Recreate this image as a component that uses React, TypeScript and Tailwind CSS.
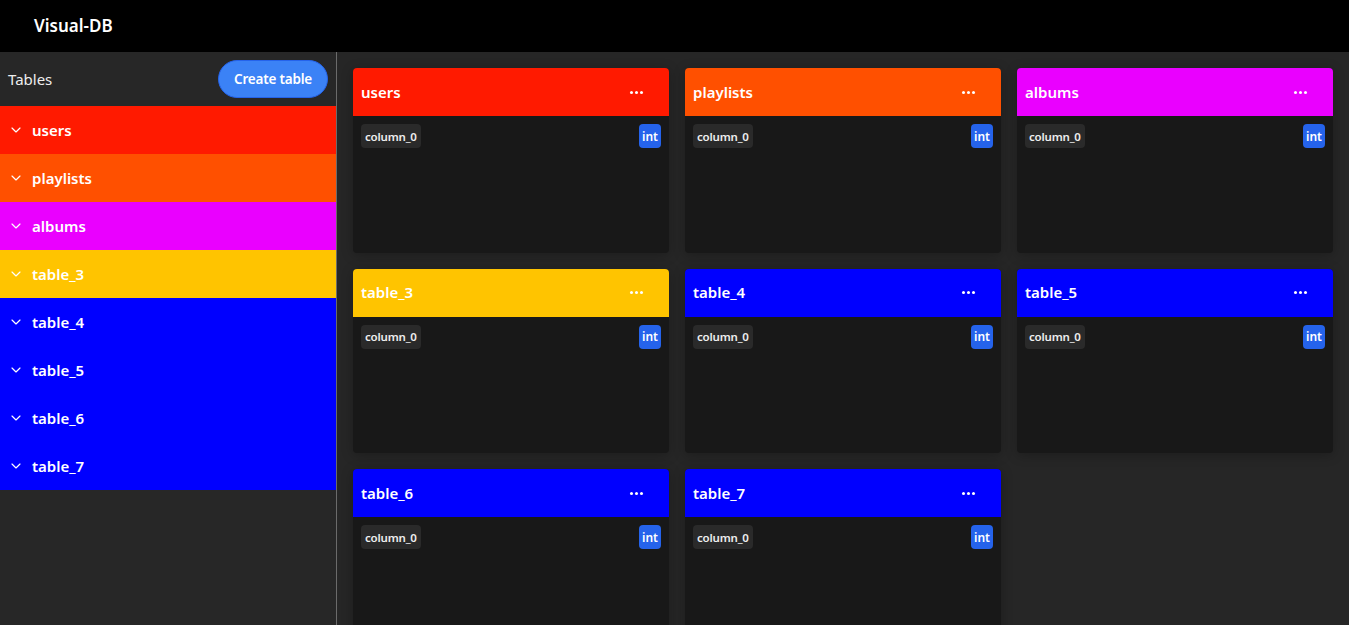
import { ChevronDown } from "lucide-react";

const tables = [
  { name: "users", color: "bg-[#ff1a00]" },
  { name: "playlists", color: "bg-[#ff5000]" },
  { name: "albums", color: "bg-[#ea00ff]" },
  { name: "table_3", color: "bg-[#ffc400]" },
  { name: "table_4", color: "bg-[#0000ff]" },
  { name: "table_5", color: "bg-[#0000ff]" },
  { name: "table_6", color: "bg-[#0000ff]" },
  { name: "table_7", color: "bg-[#0000ff]" },
];

function Dots() {
  return (
    <span className="flex items-center gap-[2px]">
      <span className="size-[3px] rounded-full bg-white" />
      <span className="size-[3px] rounded-full bg-white" />
      <span className="size-[3px] rounded-full bg-white" />
    </span>
  );
}

function TableCard({ name, color }: { name: string; color: string }) {
  return (
    <div className="h-[184.5px] rounded-[4px] overflow-hidden bg-[#181818] shadow-[0_2px_12px_rgba(0,0,0,0.25)]">
      <div className={`h-12 flex items-center justify-between pl-2 pr-[26px] ${color}`}>
        <span className="text-white font-semibold text-[15px]">{name}</span>
        <Dots />
      </div>
      <div className="flex items-start justify-between px-2 pt-2">
        <span className="h-6 px-1 pt-px flex items-center rounded-[4px] bg-[#2a2a2a] text-[#eeeeee] font-semibold text-[11.5px] tracking-[-0.2px]">
          column_0
        </span>
        <span className="h-6 px-[3px] pt-px flex items-center rounded-[4px] bg-[#2563eb] text-white font-semibold text-[12px]">
          int
        </span>
      </div>
    </div>
  );
}

export default function App() {
  return (
    <div className="h-[625px] overflow-hidden flex flex-col bg-[#262626] font-['Noto_Sans',sans-serif]">
      <header className="h-[52px] shrink-0 bg-black flex items-center pl-[34px]">
        <span className="text-white font-semibold text-[17px]">Visual-DB</span>
      </header>
      <div className="flex flex-1 min-h-0">
        <aside className="w-[337px] shrink-0 border-r border-[#6b6b6b] bg-[#272727]">
          <div className="h-[54px] flex items-center justify-between pl-2 pr-2">
            <span className="text-[#eeeeee] text-[15px]">Tables</span>
            <button className="h-[38px] w-[110px] rounded-full bg-[#3b82f6] border border-[#2563eb] text-white font-semibold text-[13.5px] tracking-[-0.2px]">
              Create table
            </button>
          </div>
          {tables.map((t) => (
            <div key={t.name} className={`h-12 flex items-center gap-[8px] pl-[8px] ${t.color}`}>
              <ChevronDown className="size-4 text-white" strokeWidth={1.75} />
              <span className="text-white font-semibold text-[15px]">{t.name}</span>
            </div>
          ))}
        </aside>
        <main className="flex-1 p-4">
          <div className="grid grid-cols-3 gap-4">
            {tables.map((t) => (
              <TableCard key={t.name} name={t.name} color={t.color} />
            ))}
          </div>
        </main>
      </div>
    </div>
  );
}
